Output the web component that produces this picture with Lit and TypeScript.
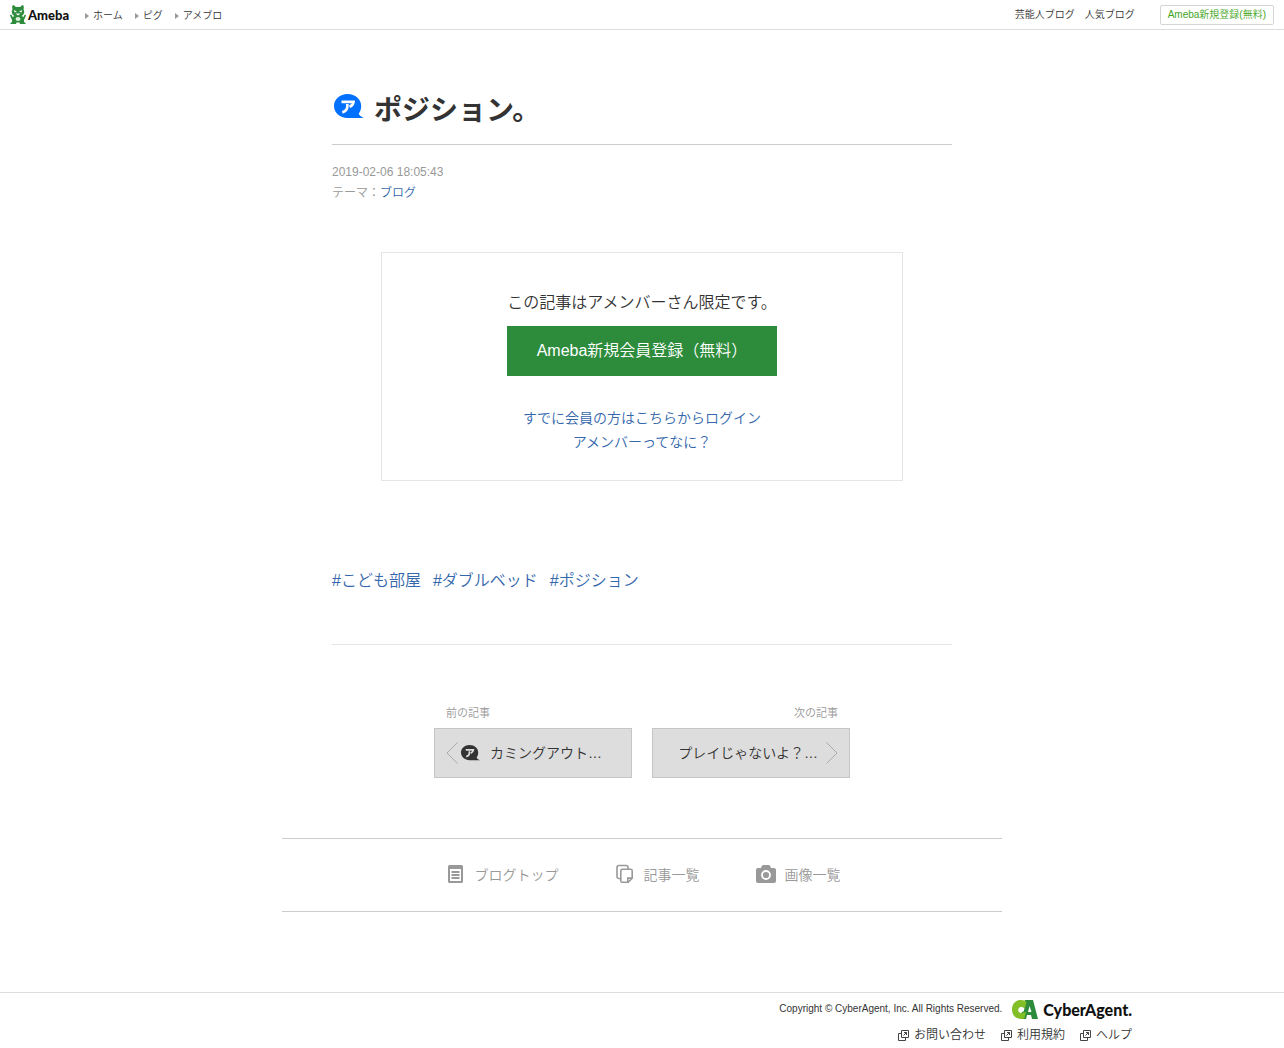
import { LitElement, html, css, svg } from "lit";
import { customElement } from "lit/decorators.js";

@customElement("amember-icon")
export class AmemberIcon extends LitElement {
  static styles = css`
    :host { display: inline-flex; flex: none; }
    .bubble { display: block; width: 100%; height: auto; }
  `;
  render() {
    return html`<svg class="bubble" viewBox="0 0 30 25" aria-hidden="true">
      <path fill="currentColor" d="M13.6 0C21.2 0 27.2 5.2 27.200 12c0 3-.9 5.500-2.500 7.700 1.100 2 2.900 3.500 5.300 4.300H13.600C6 24 0 18.800 0 12S6 0 13.600 0Z"/>
      <path fill="none" stroke="var(--glyph, #fff)" stroke-width="2.700" d="M7.500 7.800h12c-.3 2.500-1.600 4.200-4 5M13.300 10v2.600c0 3-1.600 4.900-5 5.800"/>
    </svg>`;
  }
}

@customElement("site-header")
export class SiteHeader extends LitElement {
  static styles = css`
    :host { display: block; }
    .bar { display: flex; align-items: center; height: 29px; padding: 0 10px; border-bottom: 1px solid #ddd; font-size: 10px; line-height: 20px; }
    a { color: #333; text-decoration: none; }
    .logo { display: flex; align-items: center; gap: 2px; width: 59px; margin-right: 16px; }
    .mascot { flex: none; width: 16px; height: 19px; }
    .word { font: 900 13px/20px Lato, "Liberation Sans", sans-serif; color: #111; }
    .menu { display: flex; gap: 12px; flex: 1; padding-top: 2px; }
    .menu a { display: flex; align-items: center; gap: 4px; }
    .tri { width: 4px; height: 6px; fill: #999; }
    .links { display: flex; align-items: center; gap: 10px; }
    .signup { box-sizing: border-box; height: 20px; margin-left: 15px; padding: 0 7px; border: 1px solid #d5d5d5; border-radius: 2px; line-height: 18px; color: #42a51c; }
  `;
  render() {
    return html`<header class="bar">
      <a class="logo" href="#">
        <svg class="mascot" viewBox="0 0 32 38" aria-hidden="true">
          <path fill="#2d8c3c" d="M6 0c2 0 4 2 5.500 4h9C22 2 24 0 26 0c2 2 2 6 1 9 2 3 2 6 0 9-1 2-2 3-4 4l4 2 2-4c1-1 3 0 3 1l-4 9v4l3 2v2H20l-1-3h-6l-1 3H1v-2l3-2v-4L0 21c0-1 2-2 3-1l2 4 4-2c-2-1-3-2-4-4-2-3-2-6 0-9C4 6 4 2 6 0Z"/>
          <path fill="#fff" d="m8 10 6 3-5 2Zm16 0-6 3 5 2ZM11 17h10l-5 4Z"/>
          <ellipse cx="16" cy="28" rx="5" ry="4" fill="#d9efd8"/>
        </svg>
        <span class="word">Ameba</span>
      </a>
      <nav class="menu">
        ${["ホーム", "ピグ", "アメブロ"].map(
          (t) => html`<a href="#"><svg class="tri" viewBox="0 0 4 6" aria-hidden="true"><path d="M0 0 4 3 0 6Z"/></svg>${t}</a>`
        )}
      </nav>
      <nav class="links">
        <a href="#">芸能人ブログ</a>
        <a href="#">人気ブログ</a>
        <a class="signup" href="#">Ameba新規登録(無料)</a>
      </nav>
    </header>`;
  }
}

@customElement("blog-entry")
export class BlogEntry extends LitElement {
  static styles = css`
    :host { display: block; }
    .entry { max-width: 620px; margin: 0 auto; border-bottom: 1px solid #e5e5e5; }
    a { color: #3467ac; text-decoration: none; }
    .title { display: flex; align-items: center; gap: 10px; margin: 0; padding: 1px 2px 13px; border-bottom: 1px solid #ccc; font-size: 28px; line-height: 40px; color: #333; }
    .mark { width: 30px; margin-bottom: 10px; color: #0070ff; }
    .meta { margin: 17px 0 0; font-size: 12px; line-height: 21px; color: #999; }
    .meta p { margin: 0; }
    .gate { box-sizing: border-box; max-width: 522px; margin: 48px auto 0; padding: 38px 20px 26px; border: 1px solid #e5e5e5; text-align: center; }
    .notice { margin: 0 0 11px; font-size: 16px; line-height: 24px; color: #333; }
    .join { display: inline-block; padding: 0 30px; background: #2d8c3c; color: #fff; font-size: 16px; line-height: 50px; vertical-align: top; }
    .help { display: flex; flex-direction: column; align-items: center; margin-top: 30px; font-size: 14px; line-height: 24px; }
    .tags { display: flex; flex-wrap: wrap; gap: 12px; margin: 0; padding: 88px 0 51px; list-style: none; font-size: 16px; line-height: 24px; }
  `;
  render() {
    return html`<article class="entry">
      <h1 class="title"><amember-icon class="mark"></amember-icon>ポジション。</h1>
      <div class="meta">
        <p><time datetime="2019-02-06T18:05:43">2019-02-06 18:05:43</time></p>
        <p>テーマ：<a href="#">ブログ</a></p>
      </div>
      <section class="gate">
        <p class="notice">この記事はアメンバーさん限定です。</p>
        <a class="join" href="#">Ameba新規会員登録（無料）</a>
        <div class="help">
          <a href="#">すでに会員の方はこちらからログイン</a>
          <a href="#">アメンバーってなに？</a>
        </div>
      </section>
      <ul class="tags">
        ${["こども部屋", "ダブルベッド", "ポジション"].map((t) => html`<li><a href="#">#${t}</a></li>`)}
      </ul>
    </article>`;
  }
}

@customElement("entry-pager")
export class EntryPager extends LitElement {
  static styles = css`
    :host { display: block; }
    .pager { display: grid; grid-template-columns: 1fr 1fr; gap: 20px; max-width: 416px; margin: 0 auto; }
    .label { margin: 0 0 5px; padding: 0 12px; font-size: 11px; line-height: 20px; color: #999; }
    .next .label { text-align: right; }
    .card { display: flex; align-items: center; box-sizing: border-box; height: 50px; padding: 0 11px; border: 1px solid #c6c6c6; background: #ddd; color: #333; font-size: 14px; line-height: 24px; text-decoration: none; }
    .next .card { justify-content: flex-end; gap: 8px; }
    .arrow { width: 12px; height: 22px; fill: none; stroke: #aaa; }
    .mark { width: 19px; margin: 0 10px 0 3px; --glyph: #ddd; }
  `;
  render() {
    return html`<nav class="pager">
      <div>
        <p class="label">前の記事</p>
        <a class="card" href="#">
          <svg class="arrow" viewBox="0 0 12 22" aria-hidden="true"><path d="M11.500.5 1 11l10.500 10.500"/></svg>
          <amember-icon class="mark"></amember-icon>カミングアウト…
        </a>
      </div>
      <div class="next">
        <p class="label">次の記事</p>
        <a class="card" href="#">
          プレイじゃないよ？…
          <svg class="arrow" viewBox="0 0 12 22" aria-hidden="true"><path d="M.5.5 11 11 .5 21.500"/></svg>
        </a>
      </div>
    </nav>`;
  }
}

@customElement("blog-nav")
export class BlogNav extends LitElement {
  static styles = css`
    :host { display: block; }
    .nav { display: flex; justify-content: center; gap: 56px; box-sizing: border-box; max-width: 720px; margin: 0 auto; padding: 24px 0 24px 2px; border: solid #ccc; border-width: 1px 0; }
    .item { display: flex; align-items: center; gap: 9px; color: #999; font-size: 14px; line-height: 24px; text-decoration: none; }
    .icon { width: 20px; height: 20px; margin-bottom: 2px; }
  `;
  private items = [
    { label: "ブログトップ", icon: svg`<path fill="#999" fill-rule="evenodd" d="M4 1h11.500a1.500 1.500 0 0 1 1.500 1.500v15a1.500 1.500 0 0 1-1.500 1.500H3.500A1.500 1.500 0 0 1 2 17.500v-15A1.500 1.500 0 0 1 3.500 1ZM4 5v12h11V5Z"/><path stroke="#999" stroke-width="1.800" d="M5.500 8h8M5.500 11h8M5.500 14h8"/>` },
    { label: "記事一覧", icon: svg`<g fill="none" stroke="#999" stroke-width="1.600"><path d="M5.500 14.500H3.800A1.800 1.800 0 0 1 2 12.700V3.300a1.800 1.800 0 0 1 1.800-1.800h7.400A1.800 1.800 0 0 1 13 3.300V5"/><path d="M7.300 5.300h8.400a1.500 1.500 0 0 1 1.500 1.500v7.400l-4 4H7.300a1.500 1.500 0 0 1-1.500-1.500V6.800a1.500 1.500 0 0 1 1.500-1.500ZM12.800 18v-3.900H17"/></g>` },
    { label: "画像一覧", icon: svg`<path fill="#999" d="M7.500 1h5a2 2 0 0 1 1.800 1.200L15 4h3a2 2 0 0 1 2 2v11a2 2 0 0 1-2 2H2a2 2 0 0 1-2-2V6a2 2 0 0 1 2-2h3l.7-1.800A2 2 0 0 1 7.500 1Z"/><circle cx="10" cy="11" r="4" fill="none" stroke="#fff" stroke-width="1.800"/>` },
  ];
  render() {
    return html`<nav class="nav">
      ${this.items.map((i) => html`<a class="item" href="#"><svg class="icon" viewBox="0 0 20 20" aria-hidden="true">${i.icon}</svg>${i.label}</a>`)}
    </nav>`;
  }
}

@customElement("site-footer")
export class SiteFooter extends LitElement {
  static styles = css`
    :host { display: block; }
    .footer { border-top: 1px solid #ddd; }
    .inner { max-width: 980px; margin: 0 auto; padding: 5px 0 1px; }
    .company, .links { display: flex; justify-content: flex-end; align-items: center; }
    .company { gap: 10px; height: 24px; margin-bottom: 1px; }
    .copy { font-size: 10px; line-height: 20px; padding-bottom: 2px; }
    .brand { display: flex; align-items: center; gap: 5px; color: #111; text-decoration: none; }
    .emblem { width: 26px; height: 20px; }
    .word { font: 900 16px/24px Lato, "Liberation Sans", sans-serif; }
    .links { gap: 15px; font-size: 12px; line-height: 24px; }
    .links a { display: flex; align-items: center; gap: 5px; color: #333; text-decoration: none; }
    .ext { width: 11px; height: 11px; fill: none; stroke: #444; }
  `;
  render() {
    return html`<footer class="footer"><div class="inner">
      <div class="company">
        <small class="copy">Copyright © CyberAgent, Inc. All Rights Reserved.</small>
        <a class="brand" href="#">
          <svg class="emblem" viewBox="0 0 26 20" aria-hidden="true">
            <path fill="#2d8c3c" d="M13 0h8l5 19h-6l-1-4h-4l-1 4H9l1-8Z"/>
            <path fill="#82bf26" d="M9 0c2.500 0 4.500.8 5.500 2l-1.500 6-3-1c-5-1-5 7 0 6l4-1-1.500 6C11.500 19 10 19 9 19c-5.500 0-9-4-9-9.500S3.500 0 9 0Z"/>
            <path fill="#fff" d="m17.500 6-1.500 6h3.500ZM7 9.500C8 7 10 6.500 12.500 8l-.8 3.500C9.500 12.500 7.500 12 7 9.500Z"/>
          </svg>
          <span class="word">CyberAgent.</span>
        </a>
      </div>
      <nav class="links">
        ${["お問い合わせ", "利用規約", "ヘルプ"].map(
          (t) => html`<a href="#"><svg class="ext" viewBox="0 0 11 11" aria-hidden="true"><path d="M3.500.5h7v7h-7ZM3.500 3.500h-3v7h7v-3M5.500 5.500l3-3M6 2.500h2.500V5"/></svg>${t}</a>`
        )}
      </nav>
    </div></footer>`;
  }
}

@customElement("app-root")
export class AppRoot extends LitElement {
  static styles = css`
    :host { display: block; background: #fff; color: #333; font-family: "Liberation Sans", "Noto Sans CJK JP", sans-serif; font-weight: 350; text-spacing-trim: space-all; }
    .main { padding: 60px 20px 80px; }
    .pager { margin-top: 58px; }
    .nav { margin-top: 60px; }
  `;
  render() {
    return html`
      <site-header></site-header>
      <main class="main">
        <blog-entry></blog-entry>
        <entry-pager class="pager"></entry-pager>
        <blog-nav class="nav"></blog-nav>
      </main>
      <site-footer></site-footer>
    `;
  }
}
